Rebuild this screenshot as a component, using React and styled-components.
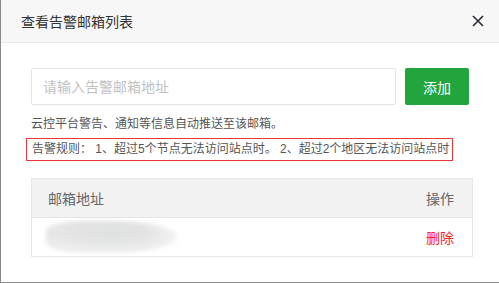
import React, { useState } from "react";
import styled, { createGlobalStyle } from "styled-components";

const GlobalStyle = createGlobalStyle`
  html, body {
    margin: 0;
    padding: 0;
    background: #8a8a8a;
    font-family: "Liberation Sans", "Noto Sans CJK SC", sans-serif;
  }
`;

const emails = [{ id: 1, address: "" }];

const App = () => {
  const [value, setValue] = useState("");

  return (
    <>
      <GlobalStyle />
      <Backdrop>
        <Modal>
          <ModalHeader>
            <ModalTitle>查看告警邮箱列表</ModalTitle>
            <CloseButton aria-label="关闭">
              <svg width="12" height="12" viewBox="0 0 12 12">
                <path
                  d="M1 1 L11 11 M11 1 L1 11"
                  stroke="#2b2b35"
                  strokeWidth="1.6"
                  fill="none"
                />
              </svg>
            </CloseButton>
          </ModalHeader>
          <ModalBody>
            <InputRow>
              <EmailInput
                type="text"
                value={value}
                onChange={(e) => setValue(e.target.value)}
                placeholder="请输入告警邮箱地址"
              />
              <AddButton>添加</AddButton>
            </InputRow>
            <Hint>云控平台警告、通知等信息自动推送至该邮箱。</Hint>
            <RuleBox>
              告警规则： 1、超过5个节点无法访问站点时。 2、超过2个地区无法访问站点时
            </RuleBox>
            <Table>
              <HeadRow>
                <Cell>邮箱地址</Cell>
                <Cell $right>操作</Cell>
              </HeadRow>
              {emails.map((item) => (
                <BodyRow key={item.id}>
                  <Cell>
                    <Blurred />
                  </Cell>
                  <Cell $right>
                    <DeleteLink>删除</DeleteLink>
                  </Cell>
                </BodyRow>
              ))}
            </Table>
          </ModalBody>
        </Modal>
      </Backdrop>
    </>
  );
};

const Backdrop = styled.div`
  width: 499px;
  height: 283px;
  display: flex;
  padding-left: 1px;
  box-sizing: border-box;
  overflow: hidden;
`;

const Modal = styled.div`
  width: 498px;
  height: 282px;
  background: #ffffff;
  display: flex;
  flex-direction: column;
`;

const ModalHeader = styled.div`
  height: 42px;
  background: #f7f7f7;
  border-bottom: 1px solid #e9e9e9;
  display: flex;
  align-items: center;
  justify-content: space-between;
  padding: 0 15px 0 20px;
`;

const ModalTitle = styled.div`
  font-size: 14px;
  color: #333333;
`;

const CloseButton = styled.button`
  border: none;
  background: transparent;
  padding: 0;
  width: 12px;
  height: 12px;
  display: flex;
  cursor: pointer;
`;

const ModalBody = styled.div`
  padding: 25px 28px 0 30px;
  display: flex;
  flex-direction: column;
`;

const InputRow = styled.div`
  display: flex;
  gap: 9px;
`;

const EmailInput = styled.input`
  width: 365px;
  height: 37px;
  box-sizing: border-box;
  border: 1px solid #e3e3e3;
  border-radius: 2px;
  padding: 0 11px;
  font-size: 14px;
  font-family: inherit;
  outline: none;
  color: #333;

  &::placeholder {
    color: #c2c2c2;
  }
`;

const AddButton = styled.button`
  width: 64px;
  height: 37px;
  border: none;
  border-radius: 2px;
  background: #21a53c;
  color: #ffffff;
  font-size: 14px;
  font-family: inherit;
  cursor: pointer;
`;

const Hint = styled.div`
  margin-top: 10px;
  font-size: 12px;
  line-height: 19px;
  color: #555555;
`;

const RuleBox = styled.div`
  margin: 4px 0 0 -5px;
  width: 427px;
  height: 23px;
  box-sizing: border-box;
  border: 1px solid #ee3535;
  padding-left: 5px;
  font-size: 12px;
  line-height: 21px;
  color: #555555;
  white-space: nowrap;
`;

const Table = styled.div`
  margin-top: 17px;
  width: 440px;
  border: 1px solid #e6e6e6;
`;

const HeadRow = styled.div`
  height: 38px;
  background: #f2f2f2;
  border-bottom: 1px solid #e6e6e6;
  display: flex;
  align-items: center;
  justify-content: space-between;
  padding: 0 18px 0 16px;
  color: #666666;
  font-size: 14px;
`;

const BodyRow = styled.div`
  height: 38px;
  display: flex;
  align-items: center;
  justify-content: space-between;
  padding: 0 18px 0 14px;
  font-size: 14px;
`;

const Cell = styled.div`
  display: flex;
  align-items: center;
  justify-content: ${(p) => (p.$right ? "flex-end" : "flex-start")};
`;

const Blurred = styled.div`
  width: 132px;
  height: 32px;
  border-radius: 30% 50% 50% 30%;
  background: linear-gradient(
      180deg,
      rgba(255, 255, 255, 0) 0%,
      rgba(255, 255, 255, 0) 50%,
      rgba(255, 255, 255, 0.5) 100%
    ),
    linear-gradient(
      90deg,
      #e7e7e7 0%,
      #e3e3e3 25%,
      #e0e1e1 50%,
      #e3e3e3 75%,
      #f4f4f4 100%
    );
  filter: blur(2px);
`;

const DeleteLink = styled.span`
  color: #ff1a1a;
  cursor: pointer;
`;

export default App;
